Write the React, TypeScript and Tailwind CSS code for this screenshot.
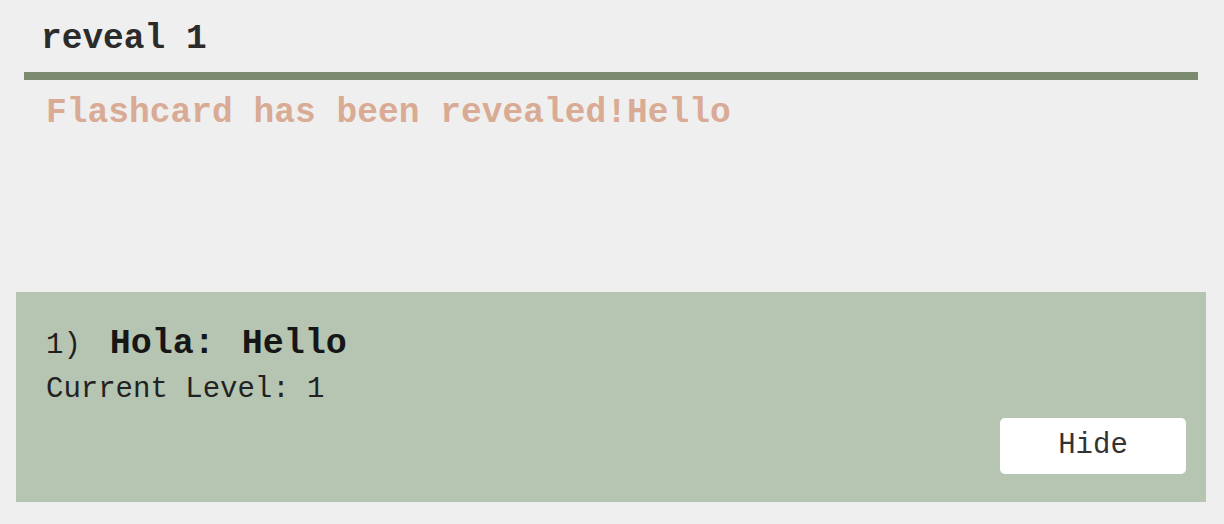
import React from 'react';

const mono = { fontFamily: '"Liberation Mono", "Courier New", monospace' };

function App() {
  return (
    <div className="min-h-screen bg-[#efefef]" style={mono}>
      <div className="h-[292px] px-[24px] pr-[26px]">
        <h1 className="pt-[19px] pl-[17px] text-[34.5px] leading-[40px] font-bold text-[#2b2b2b]">reveal 1</h1>
        <div className="mt-[13px] h-[8px] bg-[#7c8b6f]" />
        <div className="mt-[13px] pl-[22px] text-[34.6px] leading-[40px] font-bold text-[#d9ab94]">
          Flashcard has been revealed!Hello
        </div>
      </div>

      <div className="mx-[16px] w-[1190px] bg-[#b5c5b1] pt-[32px] pl-[30px] pr-[20px] pb-[28px]">
        <div className="flex items-baseline h-[40px] leading-[40px]">
          <span className="text-[29px] text-[#1f1f1f]">1)</span>
          <span className="ml-[29px] text-[35px] font-bold text-[#161616]">Hola:</span>
          <span className="ml-[27px] text-[35px] font-bold text-[#161616]">Hello</span>
        </div>
        <div className="mt-[9px] text-[29px] leading-[34px] text-[#222222]">Current Level: 1</div>
        <div className="mt-[11px] flex justify-end">
          <button className="w-[186px] h-[56px] rounded-[5px] bg-white text-[29px] text-[#333333]" style={mono}>
            Hide
          </button>
        </div>
      </div>
    </div>
  );
}

export default App;
